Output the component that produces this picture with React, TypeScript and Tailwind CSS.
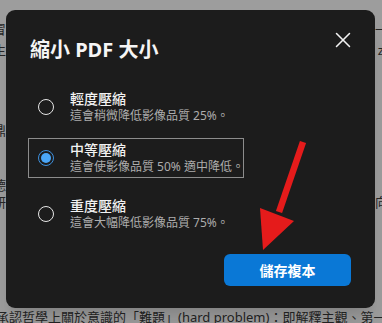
import { X } from 'lucide-react';

const options = [
  { id: 'low', title: '輕度壓縮', desc: '這會稍微降低影像品質 25%。' },
  { id: 'mid', title: '中等壓縮', desc: '這會使影像品質 50% 適中降低。' },
  { id: 'high', title: '重度壓縮', desc: '這會大幅降低影像品質 75%。' },
];

function Radio({ checked }: { checked: boolean }) {
  if (checked) {
    return (
      <span className="flex h-[16px] w-[16px] shrink-0 items-center justify-center rounded-full border-[1.5px] border-[#3d8fdc] bg-[#1b1b1b]">
        <span className="h-[10px] w-[10px] rounded-full bg-[#4aa6f7]" />
      </span>
    );
  }
  return <span className="h-[16px] w-[16px] shrink-0 rounded-full border-[1.5px] border-[#e6e6e6]" />;
}

function DocLine({ left, right, className }: { left: string; right: string; className: string }) {
  return (
    <div className={`flex h-5 items-center justify-between whitespace-nowrap text-[13px] leading-5 text-[#262626] ${className}`}>
      <span className="-ml-[7px]">{left}</span>
      <span className="-mr-[6px]">{right}</span>
    </div>
  );
}

export default function App() {
  const selected = 'mid';

  return (
    <div
      className="relative h-[323px] w-[382px] overflow-hidden bg-[#9d9d9d]"
      style={{ fontFamily: '"Noto Sans", "Noto Sans CJK TC", sans-serif' }}
    >
      {/* dimmed document behind the dialog */}
      <div className="flex h-full flex-col">
        <DocLine className="mt-[19px]" left="冒" right="一" />
        <DocLine className="mt-[1px]" left="生" right="z-" />
        <DocLine className="mt-[60px]" left="鼎" right="" />
        <DocLine className="mt-[35px]" left="德" right="]" />
        <DocLine className="mt-[-3px]" left="研" right="向" />
        <div className="mt-auto -ml-[4px] h-[16px] whitespace-nowrap text-[13px] leading-5 text-[#242424]">
          承認哲學上關於意識的「難題」(hard problem)：即解釋主觀、第一人稱
        </div>
      </div>

      {/* dialog */}
      <div className="absolute left-[6px] top-[10px] flex h-[298px] w-[369px] flex-col rounded-[9px] bg-[#1c1c1c] shadow-xl">
        <h2 className="pl-6 pt-[26px] text-[20px] font-bold leading-7 text-[#f5f5f5]">縮小 PDF 大小</h2>
        <button className="absolute left-[324px] top-[17px] text-[#f2f2f2]">
          <X size={26} strokeWidth={1.4} />
        </button>

        <div className="ml-[22px] mt-[23px] flex flex-col">
          {options.map((o, i) => {
            const on = o.id === selected;
            return (
              <div
                key={o.id}
                className={`flex h-[40px] w-[216px] items-center gap-4 border pl-[9px] ${
                  on ? 'border-[#8c8c8c]' : 'border-transparent'
                } ${i === 1 ? 'mt-[11px]' : i === 2 ? 'mt-[16px]' : ''}`}
              >
                <Radio checked={on} />
                <div className="flex flex-col whitespace-nowrap">
                  <span className="text-[14px] font-medium leading-[18px] text-[#f2f2f2]">{o.title}</span>
                  <span className="text-[12px] leading-[16px] text-[#adadad]">{o.desc}</span>
                </div>
              </div>
            );
          })}
        </div>

        <div className="mt-auto flex justify-end pb-[22px] pr-6">
          <button className="h-[32px] w-[127px] rounded-[6px] bg-[#0a78d6] text-[14px] font-bold text-white">
            儲存複本
          </button>
        </div>
      </div>

      {/* red annotation arrow */}
      <svg className="pointer-events-none absolute left-0 top-0" width="382" height="323" viewBox="0 0 382 323">
        <line x1="303" y1="142" x2="279" y2="212" stroke="#e51b1b" strokeWidth="6.5" />
        <polygon points="260,208 294,221 263,250" fill="#e51b1b" />
      </svg>
    </div>
  );
}
